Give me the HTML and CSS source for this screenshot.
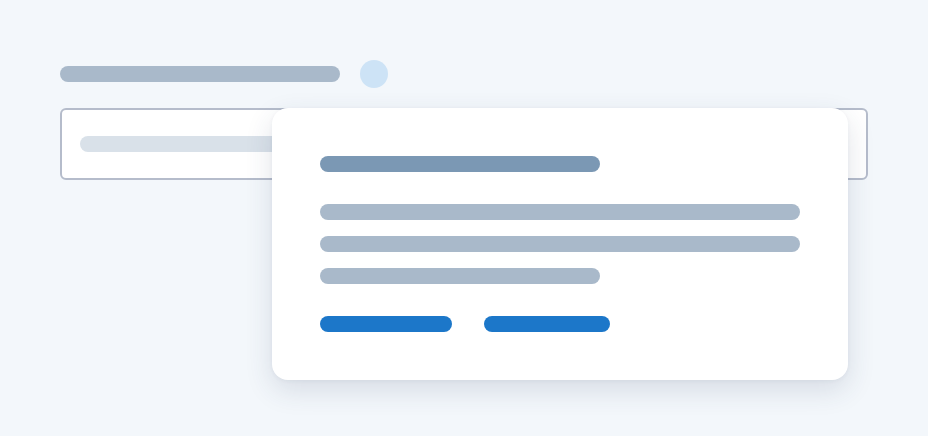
FILE: index.html
```html
<!DOCTYPE html>
<html>
<head>
<meta charset="utf-8">
<link rel="stylesheet" href="styles.css">
</head>
<body>
<div class="page">
  <div class="field-head">
    <div class="bar label-bar"></div>
    <div class="info-dot"></div>
  </div>
  <div class="field-wrap">
    <div class="input">
      <div class="bar placeholder"></div>
    </div>
    <div class="popover">
      <div class="bar title"></div>
      <div class="lines">
        <div class="bar line full"></div>
        <div class="bar line full"></div>
        <div class="bar line short"></div>
      </div>
      <div class="actions">
        <div class="bar btn btn-a"></div>
        <div class="bar btn btn-b"></div>
      </div>
    </div>
  </div>
</div>
</body>
</html>
```
FILE: styles.css
```css
html, body {
  margin: 0;
  padding: 0;
  background: #f3f7fb;
  font-family: "Liberation Sans", Arial, sans-serif;
}
.page {
  width: 928px;
  height: 436px;
  box-sizing: border-box;
  padding: 60px 60px 0 60px;
}
.bar {
  height: 16px;
  border-radius: 8px;
}
.field-head {
  display: flex;
  align-items: center;
  gap: 20px;
  height: 28px;
}
.label-bar {
  width: 280px;
  background: #a9b9ca;
}
.info-dot {
  width: 28px;
  height: 28px;
  border-radius: 50%;
  background: #cde3f6;
}
.field-wrap {
  position: relative;
  margin-top: 20px;
}
.input {
  box-sizing: border-box;
  width: 808px;
  height: 72px;
  border: 2px solid #b5bccb;
  border-radius: 6px;
  background: #ffffff;
  padding: 26px 18px;
}
.placeholder {
  width: 360px;
  background: #d9e1e9;
}
.popover {
  position: absolute;
  top: 0;
  left: 212px;
  width: 576px;
  height: 272px;
  box-sizing: border-box;
  padding: 48px;
  background: #ffffff;
  border-radius: 16px;
  box-shadow: 0 10px 28px rgba(40, 60, 90, 0.14), 0 1px 4px rgba(40, 60, 90, 0.05);
  display: flex;
  flex-direction: column;
}
.title {
  width: 280px;
  background: #7b98b4;
}
.lines {
  margin-top: 32px;
  display: flex;
  flex-direction: column;
  gap: 16px;
}
.line {
  background: #a9b9ca;
}
.full { width: 480px; }
.short { width: 280px; }
.actions {
  margin-top: 32px;
  display: flex;
  gap: 32px;
}
.btn {
  background: #1c77c9;
}
.btn-a { width: 132px; }
.btn-b { width: 126px; }
```
